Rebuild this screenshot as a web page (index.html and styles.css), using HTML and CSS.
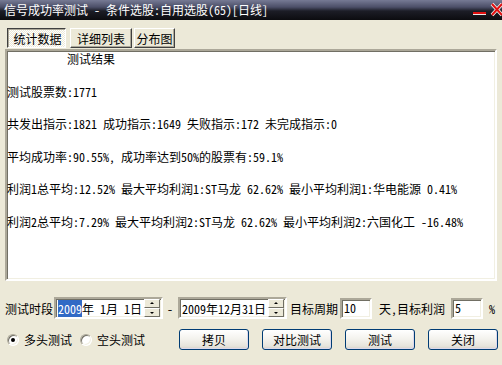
FILE: index.html
```html
<!DOCTYPE html>
<html lang="zh-CN">
<head>
  <meta charset="UTF-8">
  <title>信号成功率测试</title>
  <link rel="stylesheet" href="styles.css">
</head>
<body>

  <div class="titlebar">
    <span class="title">信号成功率测试 - 条件选股:自用选股(65)[日线]</span>
    <svg class="caption" width="31" height="20" viewBox="0 0 31 20">
      <rect x="2" y="12" width="13" height="3" fill="#e8e8e8"/>
      <rect x="2" y="12" width="13" height="2" fill="#e01010"/>
      <path d="M21 4 L31 15 M31 4 L21 15" stroke="#f0f0f0" stroke-width="3.6"/>
      <path d="M21 4 L31 15 M31 4 L21 15" stroke="#e01010" stroke-width="2"/>
    </svg>
  </div>

  <div class="tabs">
    <button class="tab pressed t1">统计数据</button>
    <button class="tab t2">详细列表</button>
    <button class="tab t3">分布图</button>
  </div>

  <div class="result">
    <p class="line">          测试结果</p>
    <p class="line">测试股票数:1771</p>
    <p class="line">共发出指示:1821 成功指示:1649 失败指示:172 未完成指示:0</p>
    <p class="line">平均成功率:90.55%, 成功率达到50%的股票有:59.1%</p>
    <p class="line">利润1总平均:12.52% 最大平均利润1:ST马龙 62.62% 最小平均利润1:华电能源 0.41%</p>
    <p class="line">利润2总平均:7.29% 最大平均利润2:ST马龙 62.62% 最小平均利润2:六国化工 -16.48%</p>
  </div>

  <div class="params">
    <span class="lbl">测试时段</span>
    <div class="date d1">
      <span class="date-text"><span class="sel">2009</span>年 1月 1日</span>
      <div class="spin"><div class="spin-btn up"></div><div class="spin-btn down"></div></div>
    </div>
    <span class="dash">-</span>
    <div class="date d2">
      <span class="date-text">2009年12月31日</span>
      <div class="spin"><div class="spin-btn up"></div><div class="spin-btn down"></div></div>
    </div>
    <span class="lbl l-period">目标周期</span>
    <div class="field f1">10</div>
    <span class="lbl l-profit">天,目标利润</span>
    <div class="field f2">5</div>
    <span class="lbl l-pct">%</span>
  </div>

  <div class="actions">
    <label class="radio r1"><span class="dot checked"></span>多头测试</label>
    <label class="radio r2"><span class="dot"></span>空头测试</label>
    <button class="btn b1">拷贝</button>
    <button class="btn">对比测试</button>
    <button class="btn">测试</button>
    <button class="btn">关闭</button>
  </div>

</body>
</html>
```

FILE: styles.css
```css
body {
  margin: 0;
  width: 502px;
  height: 365px;
  overflow: hidden;
  background: #ece9d8;
  font-family: "Noto Sans Mono CJK SC", "Noto Sans CJK SC", monospace;
  font-size: 12px;
  color: #000;
}

.titlebar {
  display: flex;
  align-items: center;
  height: 20px;
  background: linear-gradient(#767a94 0, #4c4f68 35%, #1c1d26 55%, #0c0c10 100%);
  color: #fff;
}

.title {
  padding-left: 4px;
  white-space: pre;
  line-height: 12px;
}

.caption {
  margin-left: auto;
}

.tabs {
  display: flex;
  margin-top: 8px;
  padding-left: 7px;
  height: 20px;
}

.tab {
  height: 20px;
  padding: 0;
  font: inherit;
  color: #000;
  background: #ece9d8;
  border: 1px solid;
  border-color: #fff #404040 #404040 #fff;
  box-shadow: inset -1px -1px #aca899;
}

.tab.pressed {
  border-color: #404040 #fff #fff #404040;
  box-shadow: inset 1px 1px #aca899;
  background: repeating-conic-gradient(#fff 0 25%, #ece9d8 0 50%) 0 0 / 2px 2px;
  padding: 1px 0 0 2px;
}

.t1 { width: 59px; }
.t2 { width: 62px; margin-left: 4px; }
.t3 { width: 41px; margin-left: 2px; }

.result {
  box-sizing: border-box;
  width: 492px;
  height: 232px;
  margin: 1px 0 0 5px;
  background: #fff;
  border: 2px solid;
  border-color: #aca899 #fff #fff #aca899;
  box-shadow: inset 1px 1px #716f64, inset -1px -1px #f1efe2;
  overflow: hidden;
}

.line {
  margin: 0 0 16.5px 0;
  line-height: 16px;
  white-space: pre;
}

.params {
  display: flex;
  align-items: center;
  height: 22px;
  margin: 16px 0 0 5px;
  white-space: pre;
}

.date {
  box-sizing: border-box;
  display: flex;
  align-items: center;
  width: 109px;
  height: 22px;
  padding: 0 1px 0 2px;
  background: #fff;
  border: 2px solid;
  border-color: #aca899 #fff #fff #aca899;
  box-shadow: inset 1px 1px #716f64, inset -1px -1px #f1efe2;
}

.d1 { margin-left: 1px; }

.sel {
  background: #316ac5;
  color: #fff;
}

.spin {
  display: flex;
  flex-direction: column;
  margin-left: auto;
}

.spin-btn {
  position: relative;
  box-sizing: border-box;
  width: 16px;
  height: 9px;
  background: #ece9d8;
  border: 1px solid;
  border-color: #fff #716f64 #716f64 #fff;
}

.spin-btn::after {
  content: "";
  position: absolute;
  left: 5px;
  border-left: 2px solid transparent;
  border-right: 2px solid transparent;
}

.up::after {
  top: 2px;
  border-bottom: 2px solid #000;
}

.down::after {
  top: 3px;
  border-top: 2px solid #000;
}

.dash {
  margin: 0 5px 0 4px;
}

.l-period { margin-left: 3px; }
.l-profit { margin-left: 7px; }
.l-pct { margin-left: 6px; }

.field {
  box-sizing: border-box;
  width: 32px;
  height: 21px;
  padding: 1px 0 0 2px;
  line-height: 14px;
  background: #fff;
  border: 2px solid;
  border-color: #aca899 #fff #fff #aca899;
  box-shadow: inset 1px 1px #716f64, inset -1px -1px #f1efe2;
  align-self: flex-end;
}

.f1 { margin-left: 2px; }
.f2 { margin-left: 6px; }

.actions {
  display: flex;
  align-items: center;
  height: 21px;
  margin: 10px 0 0 7px;
}

.radio {
  display: flex;
  align-items: center;
}

.r2 { margin-left: 8px; }

.dot {
  position: relative;
  box-sizing: border-box;
  width: 12px;
  height: 12px;
  margin-right: 5px;
  border-radius: 50%;
  background: #fff;
  border: 1px solid;
  border-color: #aca899 #fff #fff #aca899;
  box-shadow: inset 1px 1px #716f64, inset -1px -1px #f1efe2;
}

.dot.checked::after {
  content: "";
  position: absolute;
  left: 3px;
  top: 3px;
  width: 4px;
  height: 4px;
  border-radius: 50%;
  background: #000;
}

.btn {
  box-sizing: border-box;
  width: 70px;
  height: 21px;
  margin-left: 13px;
  padding: 0;
  font: inherit;
  color: #000;
  border: 1px solid #003c74;
  border-radius: 3px;
  background: linear-gradient(#fff 0, #f4f3ee 45%, #e6e4dc 85%, #d6d0c5 100%);
  box-shadow: inset -1px -1px #dcd9ec;
}

.btn.b1 {
  margin-left: 34px;
}
```
